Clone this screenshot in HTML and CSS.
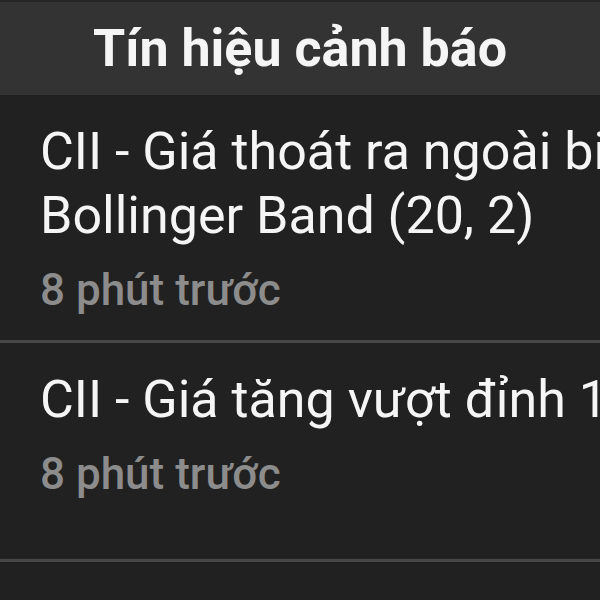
FILE: index.html
```html
<!DOCTYPE html>
<html lang="vi">
<head>
    <meta charset="UTF-8">
    <meta name="viewport" content="width=device-width, initial-scale=1.0">
    <title>Tín hiệu cảnh báo</title>
    <link rel="stylesheet" href="styles.css">
</head>
<body>
    <div class="header">
        <h1>Tín hiệu cảnh báo</h1>
    </div>

    <div class="alert-list">
        <div class="alert-item">
            <div class="alert-title">
                <span class="line">CII - Giá thoát ra ngoài biên trên</span>
                <span class="line">Bollinger Band (20, 2)</span>
            </div>
            <div class="alert-time">8 phút trước</div>
        </div>

        <div class="alert-item">
            <div class="alert-title">
                <span class="line">CII - Giá tăng vượt đỉnh 1 tháng</span>
            </div>
            <div class="alert-time">8 phút trước</div>
        </div>
    </div>
</body>
</html>
```

FILE: styles.css
```css
body {
    font-family: Roboto, sans-serif;
    background-color: #212121;
    margin: 0;
    padding: 0;
    overflow: hidden;
}
.header {
    height: 93px;
    border-top: 2px solid #262626;
    background-color: #333333;
    display: flex;
    align-items: center;
    justify-content: center;
}
.header h1 {
    margin: 0;
    font-size: 52px;
    font-weight: 700;
    color: #f5f5f5;
}
.alert-list {
    overflow: hidden;
}
.alert-item {
    padding: 25px 0 26px 40px;
    min-height: 165px;
    border-bottom: 3px solid #474747;
}
.alert-title {
    color: #f5f5f5;
    font-size: 52px;
    line-height: 64px;
}
.alert-title .line {
    display: block;
    white-space: nowrap;
}
.alert-time {
    margin-top: 18px;
    color: #8c8c8c;
    font-size: 44px;
    font-weight: 500;
    line-height: 48px;
}
```
